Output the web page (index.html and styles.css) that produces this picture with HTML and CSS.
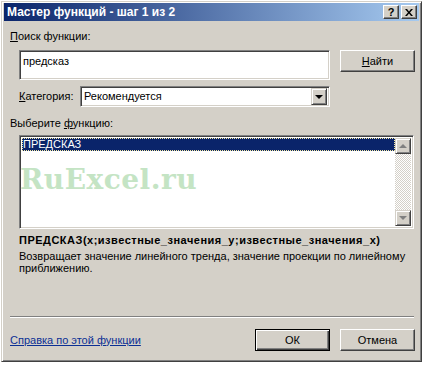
FILE: index.html
```html
<!DOCTYPE html>
<html lang="ru">
<head>
    <meta charset="UTF-8">
    <meta name="viewport" content="width=device-width, initial-scale=1.0">
    <title>Мастер функций - шаг 1 из 2</title>
    <link rel="stylesheet" href="styles.css">
</head>
<body>
    <div class="window">
        <div class="titlebar">
            <span class="title">Мастер функций - шаг 1 из 2</span>
            <div class="tb-buttons">
                <span class="tb-btn help">?</span>
                <span class="tb-btn close">
                    <svg width="8" height="7" viewBox="0 0 8 7"><path d="M0 0h2l2 2.5 2-2.5h2l-3 3.5 3 3.5h-2l-2-2.5-2 2.5h-2l3-3.5z" fill="#000"/></svg>
                </span>
            </div>
        </div>
        <div class="content">
            <div class="label"><u>П</u>оиск функции:</div>
            <div class="search-row">
                <div class="field search-field">предсказ</div>
                <button class="btn"><u>Н</u>айти</button>
            </div>
            <div class="cat-row">
                <span class="cat-label"><u>К</u>атегория:</span>
                <div class="field select">
                    <span class="select-text">Рекомендуется</span>
                    <span class="drop-btn"><span class="tri-down"></span></span>
                </div>
            </div>
            <div class="label list-label">Выберите <u>ф</u>ункцию:</div>
            <div class="field listbox">
                <div class="list-items">
                    <div class="list-item selected">ПРЕДСКАЗ</div>
                </div>
                <div class="scrollbar">
                    <span class="sb-btn"><span class="tri-up"></span></span>
                    <span class="sb-track"></span>
                    <span class="sb-btn"><span class="tri-down gray"></span></span>
                </div>
                <div class="watermark">RuExcel.ru</div>
            </div>
            <div class="signature">ПРЕДСКАЗ(x;известные_значения_y;известные_значения_x)</div>
            <div class="desc">Возвращает значение линейного тренда, значение проекции по линейному приближению.</div>
            <div class="separator"></div>
            <div class="footer">
                <a class="help-link" href="#">Справка по этой функции</a>
                <button class="btn default">ОК</button>
                <button class="btn">Отмена</button>
            </div>
        </div>
    </div>
</body>
</html>
```

FILE: styles.css
```css
body {
  margin: 0;
  background-color: #fff;
  font-family: "Liberation Sans", Arial, sans-serif;
  font-size: 11px;
  line-height: 13px;
  color: #000;
}

.window {
  width: 421px;
  height: 361px;
  margin: 1px 0 0 1px;
  box-sizing: border-box;
  background-color: #d4d0c8;
  border: 1px solid;
  border-color: #d4d0c8 #404040 #404040 #d4d0c8;
  box-shadow: inset 1px 1px #fff, inset -1px -1px #808080;
  padding: 1px 2px 2px 2px;
  display: flex;
  flex-direction: column;
}

.titlebar {
  height: 18px;
  flex-shrink: 0;
  background: linear-gradient(to right, #0a246a, #a6caf0);
  display: flex;
  align-items: center;
  justify-content: space-between;
}

.title {
  color: #fff;
  font-weight: bold;
  font-size: 12px;
  padding: 1px 0 0 3px;
}

.tb-buttons {
  display: flex;
  gap: 2px;
  margin-right: 2px;
}

.tb-btn {
  width: 16px;
  height: 14px;
  box-sizing: border-box;
  background-color: #d4d0c8;
  border: 1px solid;
  border-color: #fff #404040 #404040 #fff;
  box-shadow: inset -1px -1px #808080;
  display: flex;
  align-items: center;
  justify-content: center;
  font-weight: bold;
  font-size: 11px;
}

.content {
  flex: 1;
  display: flex;
  flex-direction: column;
  padding: 0 4px 8px 6px;
}

.label {
  margin-top: 9px;
}

u {
  text-decoration: underline;
}

.field {
  background-color: #fff;
  box-sizing: border-box;
  border: 1px solid;
  border-color: #808080 #fff #fff #808080;
  box-shadow: inset 1px 1px #404040, inset -1px -1px #d4d0c8;
}

.search-row {
  display: flex;
  align-items: flex-start;
  gap: 10px;
  margin: 7px 0 0 9px;
}

.search-field {
  width: 311px;
  height: 30px;
  padding: 4px 3px;
}

.btn {
  width: 75px;
  height: 22px;
  box-sizing: border-box;
  background-color: #d4d0c8;
  border: 1px solid;
  border-color: #fff #404040 #404040 #fff;
  box-shadow: inset -1px -1px #808080;
  font-family: inherit;
  font-size: 11px;
  color: #000;
  padding: 0;
}

.btn.default {
  border: 1px solid #000;
  box-shadow: inset 1px 1px #fff, inset -1px -1px #404040, inset -2px -2px #808080;
}

.cat-row {
  display: flex;
  align-items: center;
  margin: 6px 0 0 9px;
}

.cat-label {
  width: 61px;
}

.select {
  width: 250px;
  height: 21px;
  display: flex;
  align-items: center;
  justify-content: space-between;
  padding: 2px;
}

.select-text {
  padding-left: 1px;
}

.drop-btn {
  width: 16px;
  height: 17px;
  box-sizing: border-box;
  background-color: #d4d0c8;
  border: 1px solid;
  border-color: #d4d0c8 #404040 #404040 #d4d0c8;
  box-shadow: inset 1px 1px #fff, inset -1px -1px #808080;
  display: flex;
  align-items: center;
  justify-content: center;
}

.tri-down {
  width: 0;
  height: 0;
  border-left: 4px solid transparent;
  border-right: 4px solid transparent;
  border-top: 4px solid #000;
}

.tri-down.gray {
  border-top-color: #808080;
}

.tri-up {
  width: 0;
  height: 0;
  border-left: 4px solid transparent;
  border-right: 4px solid transparent;
  border-bottom: 4px solid #808080;
}

.list-label {
  margin-top: 10px;
}

.listbox {
  position: relative;
  width: 395px;
  height: 94px;
  margin: 5px 0 0 9px;
  padding: 2px;
  display: flex;
}

.list-items {
  flex: 1;
}

.list-item {
  height: 13px;
  padding-left: 1px;
}

.list-item.selected {
  background-color: #0a246a;
  color: #fff;
  outline: 1px dotted #f4e8a0;
  outline-offset: -1px;
}

.scrollbar {
  width: 16px;
  display: flex;
  flex-direction: column;
}

.sb-btn {
  height: 16px;
  box-sizing: border-box;
  background-color: #d4d0c8;
  border: 1px solid;
  border-color: #d4d0c8 #404040 #404040 #d4d0c8;
  box-shadow: inset 1px 1px #fff, inset -1px -1px #808080;
  display: flex;
  align-items: center;
  justify-content: center;
}

.sb-track {
  flex: 1;
  background: repeating-conic-gradient(#d4d0c8 0 25%, #fff 0 50%) 0 0 / 2px 2px;
}

.watermark {
  position: absolute;
  left: 0;
  top: 28px;
  font-family: "DejaVu Serif", serif;
  font-weight: bold;
  font-size: 28px;
  line-height: 32px;
  letter-spacing: 0.5px;
  color: #c4e4c4;
}

.signature {
  margin: 5px 0 0 9px;
  font-weight: bold;
  letter-spacing: 0.5px;
}

.desc {
  margin: 3px 0 0 9px;
  line-height: 12px;
}

.separator {
  margin: auto 0 0 0;
  height: 0;
  border-top: 1px solid #808080;
  border-bottom: 1px solid #fff;
  margin-right: 1px;
}

.footer {
  display: flex;
  align-items: center;
  gap: 10px;
  margin-top: 11px;
}

.help-link {
  color: #0b2f94;
  text-decoration: underline;
  margin-right: auto;
}
```
